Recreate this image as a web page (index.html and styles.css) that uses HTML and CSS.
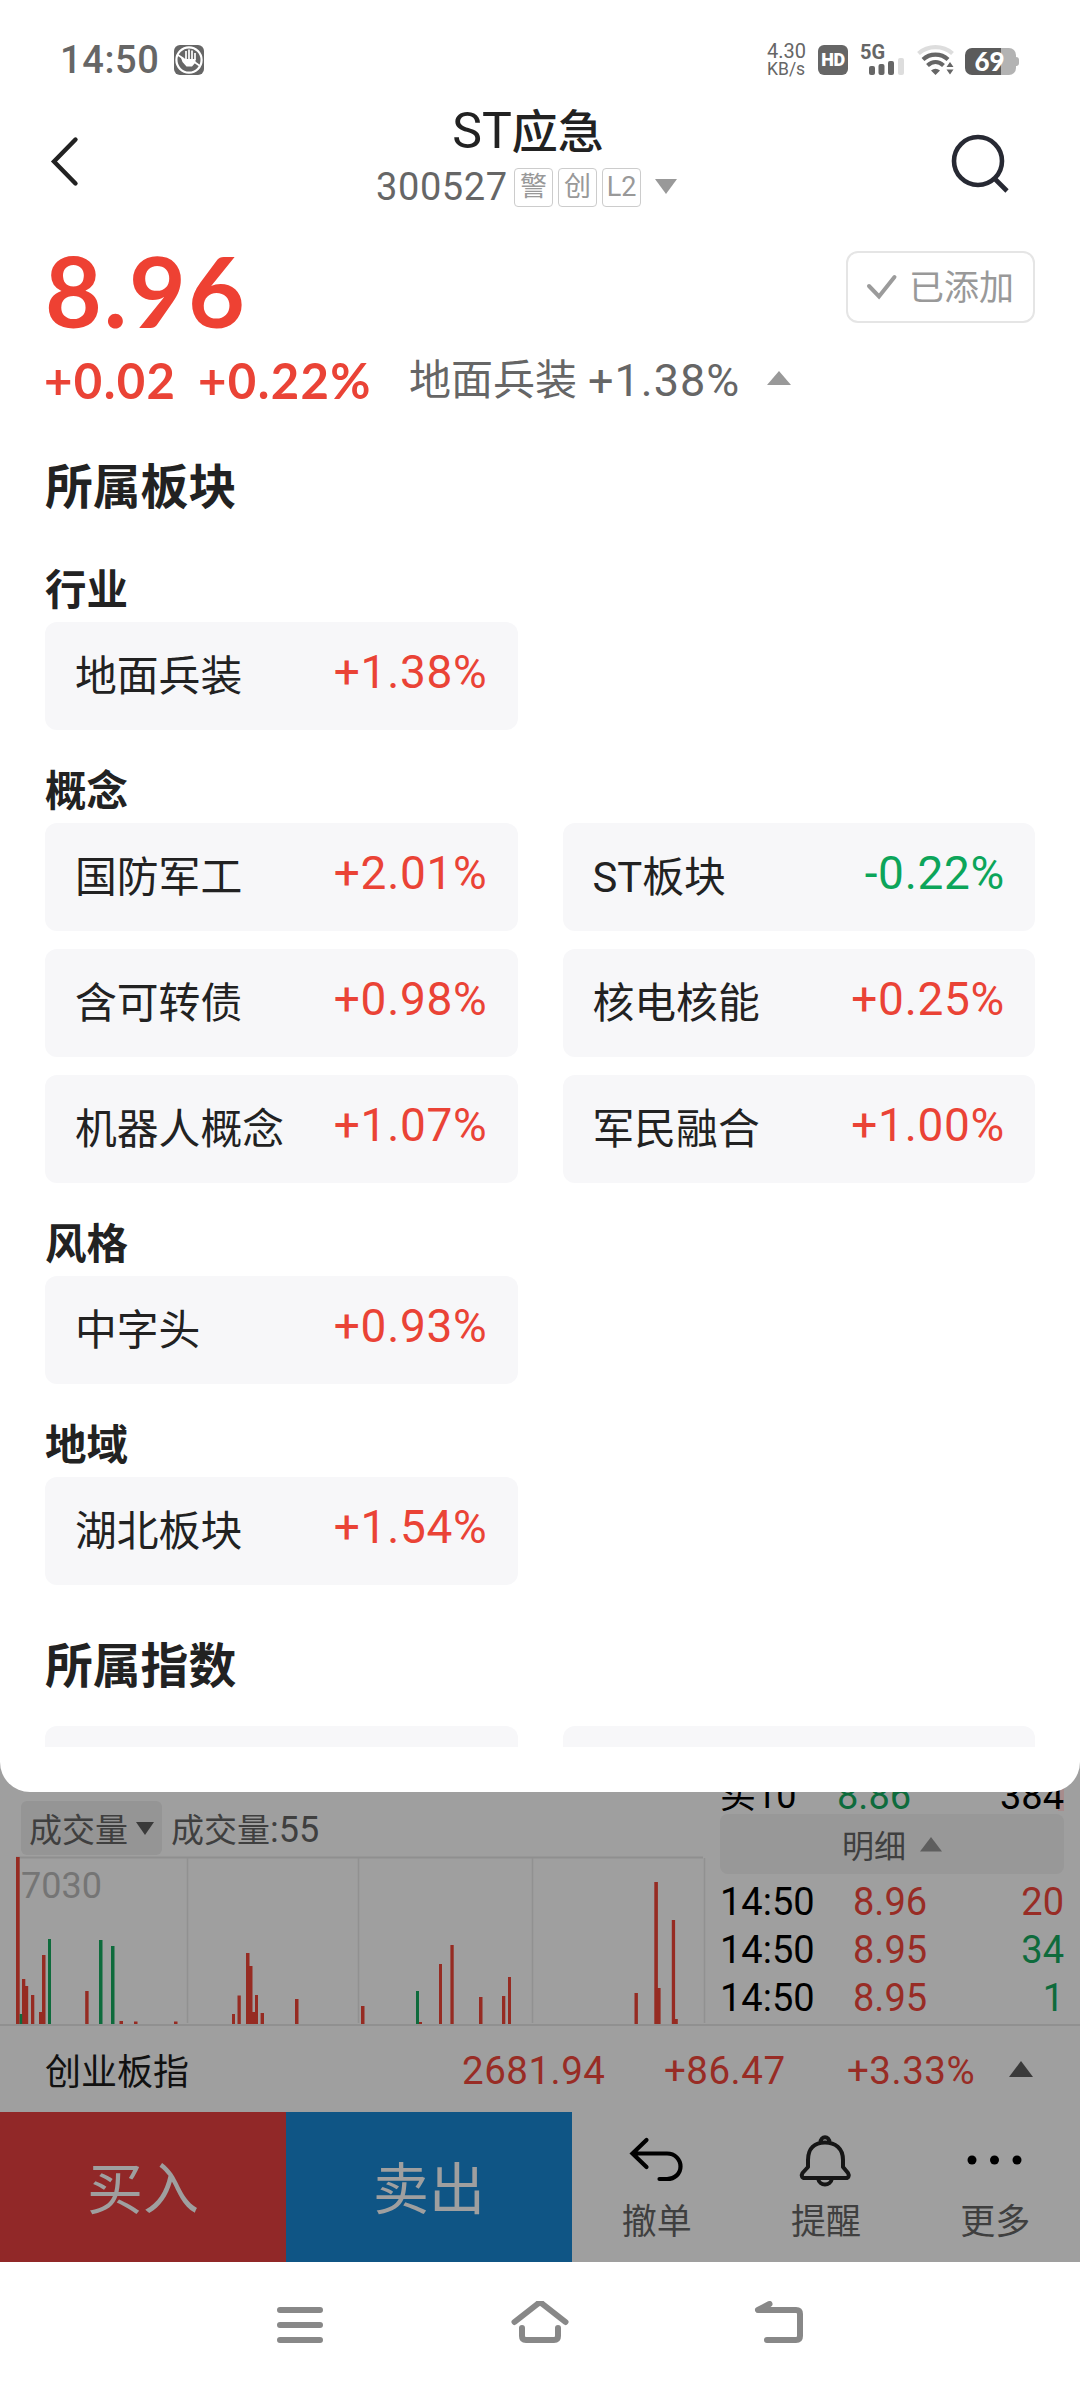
FILE: index.html
```html
<!DOCTYPE html>
<html lang="zh-CN">
<head>
    <meta charset="UTF-8">
    <meta name="viewport" content="width=device-width, initial-scale=1.0">
    <title>ST应急 300527</title>
    <link rel="stylesheet" href="styles.css">
</head>
<body>
    <div class="sheet">
        <div class="status-bar">
            <span class="clock">14:50</span>
            <svg class="hand" width="30" height="30" viewBox="0 0 30 30">
                <rect width="30" height="30" rx="6" fill="#666"/>
                <circle cx="15" cy="15" r="12.6" fill="none" stroke="#fff" stroke-width="2.2"/>
                <path d="M4 10l6 4M12 15V6M15 15V4.500M18 15V5.500M21 15V8M19 16l7 5" fill="none" stroke="#fff" stroke-width="1.700"/>
                <path d="M6.500 11.500l5 2.500h10v3.500l-3.500 4h-5.500l-4-4.500z" fill="#fff"/>
            </svg>
            <div class="status-right">
                <div class="speed"><span>4.30</span><span class="unit">KB/s</span></div>
                <div class="hd">HD</div>
                <div class="signal">
                    <span>5G</span>
                    <svg width="36" height="17" viewBox="0 0 36 17">
                        <rect x="0" y="8" width="6" height="9" rx="2" fill="#666"/>
                        <rect x="9.500" y="6" width="6" height="11" rx="2" fill="#666"/>
                        <rect x="19" y="3" width="6" height="14" rx="2" fill="#666"/>
                        <rect x="29" y="0" width="6" height="17" rx="2" fill="#ddd"/>
                    </svg>
                </div>
                <svg class="wifi" width="38" height="30" viewBox="0 0 38 30">
                    <path d="M1.500 8.500C11 0 26 0 35.500 8.500" fill="none" stroke="#ddd" stroke-width="4.200"/>
                    <path d="M6 14.500C13 8 24 8 31 14.500M10.500 20.500c5-4.500 11-4.500 16 0" fill="none" stroke="#666" stroke-width="4.200"/>
                    <path d="M14 25.500q4.500-3.500 9 0L18.500 30zM29.500 22l3.500-5 3.500 5zM29.500 24.500h7L33 29.500z" fill="#666"/>
                </svg>
                <div class="battery"><span>69</span></div>
            </div>
        </div>

        <div class="title-bar">
            <svg class="back" width="30" height="52" viewBox="0 0 30 52">
                <path d="M26.500 3.500L5 25.500l21.500 22" fill="none" stroke="#222" stroke-width="4.400" stroke-linecap="round"/>
            </svg>
            <div class="title">
                <h1><span>ST</span>应急</h1>
                <div class="code">
                    <span class="code-num">300527</span>
                    <span class="tag">警</span>
                    <span class="tag">创</span>
                    <span class="tag">L2</span>
                    <svg class="code-arrow" width="24" height="16" viewBox="0 0 24 16"><path d="M1 0h22L12 15z" fill="#999"/></svg>
                </div>
            </div>
            <svg class="search" width="60" height="60" viewBox="0 0 60 60">
                <circle cx="27" cy="27" r="24" fill="none" stroke="#272933" stroke-width="4.600"/>
                <path d="M43.500 44.500L56 57" stroke="#272933" stroke-width="4.600"/>
            </svg>
        </div>

        <div class="quote">
            <div class="price">8.96</div>
            <div class="added">
                <svg width="32" height="26" viewBox="0 0 32 26"><path d="M3 12l10 10.500L28.500 3" fill="none" stroke="#9b9b9b" stroke-width="4" stroke-linecap="round"/></svg>
                <span>已添加</span>
            </div>
        </div>
        <div class="change">
            <span class="diff">+0.02</span>
            <span class="diff pct">+0.22%</span>
            <span class="sector">地面兵装</span>
            <span class="sector-pct">+1.38%</span>
            <svg width="24" height="16" viewBox="0 0 24 16"><path d="M0 15h24L12 1z" fill="#999"/></svg>
        </div>

        <div class="boards">
            <h2>所属板块</h2>
            <h3>行业</h3>
            <div class="grid">
                <div class="card"><span>地面兵装</span><b>+1.38%</b></div>
            </div>
            <h3>概念</h3>
            <div class="grid">
                <div class="card"><span>国防军工</span><b>+2.01%</b></div>
                <div class="card"><span>ST板块</span><b class="down">-0.22%</b></div>
                <div class="card"><span>含可转债</span><b>+0.98%</b></div>
                <div class="card"><span>核电核能</span><b>+0.25%</b></div>
                <div class="card"><span>机器人概念</span><b>+1.07%</b></div>
                <div class="card"><span>军民融合</span><b>+1.00%</b></div>
            </div>
            <h3>风格</h3>
            <div class="grid">
                <div class="card"><span>中字头</span><b>+0.93%</b></div>
            </div>
            <h3>地域</h3>
            <div class="grid">
                <div class="card"><span>湖北板块</span><b>+1.54%</b></div>
            </div>
            <h2 class="index-title">所属指数</h2>
            <div class="grid">
                <div class="card"></div>
                <div class="card"></div>
            </div>
        </div>
    </div>

    <div class="market">
        <div class="volume">
            <div class="volume-head">
                <div class="picker">成交量<svg width="18" height="13" viewBox="0 0 18 13"><path d="M0 0h18L9 13z" fill="#3a3a3a"/></svg></div>
                <span class="volume-now">成交量<em>:55</em></span>
            </div>
            <svg class="chart" width="706" height="168" viewBox="0 0 706 168">
                <path d="M16 1.500H703" stroke="#8f8f8f" stroke-width="2"/>
                <path d="M187.500 2V167M358.500 2V167M532.500 2V167M704.500 2V167" stroke="#919191" stroke-width="1.500"/>
                <text x="21" y="42" class="chart-max">7030</text>
                <g class="bars-up">
                    <path d="M16 1h3.700v167H16zM22 123h3.300v45H22zM25.200 130h3v38h-3zM31 139h3.300v29H31zM39 156h3v12h-3zM42 99h3.500v69H42zM85.200 135h3.400v33h-3.400zM119.500 165h3.500v3h-3.500zM134 165.500h3.500v2.500H134zM174 165.500h3.500v2.500H174z"/>
                    <path d="M232 158h3v10h-3zM237.500 139.500h3.300V168h-3.300zM246 97h3.500v71H246zM249.500 110h3v58h-3zM252.500 156h2.500v12h-2.500zM255 139h3v29h-3zM260.600 157h3.400v11h-3.400zM295 143h3.500v25H295zM361 150h3.500v18H361zM419 166h3v2h-3z"/>
                    <path d="M439 108h3v60h-3zM450.400 89h3.300v79h-3.300zM479 141h3.500v27H479zM502 140h3.300v28H502zM508 121h3v47h-3zM634.500 137h3.400v31h-3.400zM654.300 26h3.600v142h-3.600zM657.900 132h2.700v36h-2.700zM671.800 64h3.300v104h-3.300zM675 163h2.800v5H675z"/>
                </g>
                <path class="bars-down" d="M19.700 158h2.500v10h-2.500zM48 83h3v85h-3zM99 84h3.500v84H99zM111 90h3.500v78H111zM416 135h3v33h-3z"/>
            </svg>
        </div>
        <div class="ticks">
            <div class="tick bid"><span>买10</span><span class="down">8.86</span><span>384</span></div>
            <div class="detail">明细<svg width="22" height="16" viewBox="0 0 22 16"><path d="M0 15.500h22L11 1z" fill="#5e5e5e"/></svg></div>
            <div class="tick"><span>14:50</span><span class="up">8.96</span><span class="up">20</span></div>
            <div class="tick"><span>14:50</span><span class="up">8.95</span><span class="down">34</span></div>
            <div class="tick"><span>14:50</span><span class="up">8.95</span><span class="down">1</span></div>
        </div>
    </div>

    <div class="index-row">
        <span class="index-name">创业板指</span>
        <span class="index-value">2681.94</span>
        <span class="index-diff">+86.47</span>
        <span class="index-pct">+3.33%</span>
        <svg width="24" height="16" viewBox="0 0 24 16"><path d="M0 16h24L12 0z" fill="#3a3a3a"/></svg>
    </div>

    <div class="actions">
        <div class="buy">买入</div>
        <div class="sell">卖出</div>
        <div class="action">
            <svg width="56" height="56" viewBox="0 0 56 56">
                <path d="M17.500 8L3.500 21.500l14 13.500M4 21.500h34c8 0 13.500 6 13.500 13s-5.500 12.500-13.500 12.500H30.500" fill="none" stroke="#000" stroke-width="4.200" stroke-linecap="round"/>
            </svg>
            <span>撤单</span>
        </div>
        <div class="action">
            <svg width="56" height="56" viewBox="0 0 56 56">
                <path d="M22.500 10.500c0-7 9-7 9 0M10 28C10 16 17 10.500 27 10.500S45 16 45 28v7l5 6c1.500 2.500.500 5-2 5H6.500c-2.500 0-3.500-2.500-2-5l5.500-6zM20 46.500c1.500 8 12.500 8 14 0" fill="none" stroke="#161616" stroke-width="4" stroke-linejoin="round"/>
            </svg>
            <span>提醒</span>
        </div>
        <div class="action">
            <svg width="56" height="56" viewBox="0 0 56 56">
                <circle cx="5" cy="28" r="4.500"/><circle cx="27.500" cy="28" r="4.500"/><circle cx="50" cy="28" r="4.500"/>
            </svg>
            <span>更多</span>
        </div>
    </div>

    <div class="nav-bar">
        <svg width="56" height="48" viewBox="0 0 56 48">
            <path d="M8 9h40M8 24h40M8 39h40"/>
        </svg>
        <svg width="60" height="48" viewBox="0 0 60 48">
            <path d="M4.500 21L27.500 3q2.500-2 5 0l23 18M12 27v8q0 4 4 4h28q4 0 4-4v-8"/>
        </svg>
        <svg width="56" height="48" viewBox="0 0 56 48">
            <path d="M17.500 3L6 9h38q4 0 4 4v22q0 4-4 4H15"/>
        </svg>
    </div>
</body>
</html>
```
FILE: styles.css
```css
* {
    box-sizing: border-box;
}

body {
    margin: 0;
    width: 1080px;
    height: 2388px;
    overflow: hidden;
    background-color: #9f9f9f;
    font-family: Roboto, "Noto Sans CJK SC", sans-serif;
    font-weight: 450;
    color: #222;
}

svg {
    display: block;
    flex: none;
}

h1, h2, h3 {
    margin: 0;
}

/* 上方弹出面板 */
.sheet {
    height: 1792px;
    background-color: #fff;
    border-radius: 0 0 30px 30px;
    position: relative;
    z-index: 1;
}

.status-bar {
    display: flex;
    align-items: center;
    height: 104px;
    padding: 15px 60px 0;
    color: #666;
}

.clock {
    font-size: 38px;
    font-weight: 500;
    letter-spacing: 0.6px;
    width: 114px;
}

.status-right {
    margin-left: auto;
    display: flex;
    align-items: center;
}

.speed {
    display: flex;
    flex-direction: column;
    width: 51px;
    font-size: 20px;
    line-height: 16px;
}

.speed .unit {
    font-size: 17.5px;
    line-height: 16px;
    margin-top: 2px;
}

.hd {
    width: 30px;
    height: 30px;
    border-radius: 6px;
    background-color: #666;
    color: #fff;
    font-size: 18px;
    font-weight: 900;
    line-height: 30px;
    text-align: center;
    letter-spacing: -0.5px;
}

.signal {
    width: 45px;
    height: 30px;
    margin-left: 12px;
    font-size: 20px;
    font-weight: 700;
    line-height: 15px;
}

.signal span {
    display: block;
    height: 13px;
}

.signal svg {
    margin-left: 9px;
}

.wifi {
    margin-left: 12px;
}

.battery {
    width: 51px;
    height: 27px;
    margin: 3px 4px 0 10px;
    padding-right: 2px;
    border-radius: 7px;
    background: linear-gradient(to right, #5b5b5b 70%, #b3b3b3 70%);
    color: #fff;
    font-family: Lato, sans-serif;
    font-size: 26px;
    font-weight: 900;
    line-height: 27px;
    text-align: center;
    position: relative;
}

.battery::after {
    content: "";
    position: absolute;
    right: -3px;
    top: 9px;
    width: 3px;
    height: 9px;
    border-radius: 0 3px 3px 0;
    background-color: #b3b3b3;
}

.title-bar {
    display: flex;
    justify-content: space-between;
    height: 134px;
    padding: 0 69px 0 49px;
}

.back {
    margin-top: 32px;
}

.title {
    width: 310px;
    margin-left: 32px;
}

.title h1 {
    font-size: 46px;
    font-weight: 500;
    line-height: 54px;
    margin-left: -6px;
    text-align: center;
}

.title h1 span {
    font-size: 50px;
    font-weight: 450;
}

.code {
    display: flex;
    align-items: center;
    height: 40px;
    margin-top: 8px;
}

.code-num {
    color: #666;
    font-size: 38px;
    letter-spacing: 0.6px;
    width: 138px;
}

.tag {
    width: 39px;
    height: 39px;
    margin-right: 5px;
    border: 1.5px solid #ccc;
    border-radius: 4px;
    color: #999;
    font-size: 27px;
    font-weight: 400;
    line-height: 37px;
    text-align: center;
}

.code-arrow {
    margin-left: 8px;
}

.search {
    margin-top: 30px;
}

.quote {
    display: flex;
    justify-content: space-between;
    height: 112px;
    padding: 0 45px 0 45px;
}

.price {
    font-family: Lato, sans-serif;
    font-size: 98px;
    font-weight: 700;
    line-height: 104px;
    letter-spacing: 2px;
    color: #ee4133;
}

.added {
    display: flex;
    align-items: center;
    width: 189px;
    height: 72px;
    margin-top: 13px;
    padding-left: 18px;
    border: 2px solid #e5e5e5;
    border-radius: 12px;
    color: #999;
    font-size: 35px;
    font-weight: 400;
    line-height: 68px;
}

.added span {
    margin: 3px 0 0 11px;
}

.change {
    display: flex;
    align-items: center;
    height: 60px;
    padding-left: 44px;
    white-space: nowrap;
}

.diff {
    width: 154px;
    font-family: Lato, sans-serif;
    font-size: 49px;
    font-weight: 700;
    letter-spacing: 1.4px;
    color: #ea4336;
}

.pct {
    width: 211px;
}

.sector {
    width: 179px;
    font-size: 42px;
    font-weight: 400;
    line-height: 58px;
    margin-top: 2px;
    color: #666;
}

.sector-pct {
    width: 179px;
    font-size: 45px;
    letter-spacing: 1px;
    color: #666;
}

.change svg {
    margin-top: -4px;
}

.boards {
    height: 1337px;
    padding: 0 45px;
    overflow: hidden;
}

.boards h2 {
    height: 154px;
    padding-top: 48px;
    font-size: 47.8px;
    line-height: 60px;
    font-weight: 700;
}

.boards h3 {
    height: 58px;
    font-size: 41.5px;
    line-height: 53px;
    font-weight: 700;
}

.boards .index-title {
    height: 106px;
    padding-top: 17px;
}

.grid {
    display: grid;
    grid-template-columns: 1fr 1fr;
    gap: 18px 45px;
    margin-bottom: 35px;
}

.card {
    display: flex;
    justify-content: space-between;
    height: 108px;
    padding: 0 30px;
    border-radius: 12px;
    background-color: #f7f7f9;
    font-size: 41.8px;
    font-weight: 400;
    line-height: 110px;
}

.card b {
    font-size: 46px;
    font-weight: 450;
    line-height: 100px;
    letter-spacing: 0.7px;
    color: #ea4336;
}

.card .down {
    color: #0ca55a;
}

/* 被遮罩压暗的行情页 */
.market {
    display: flex;
    height: 234px;
    border-bottom: 2px solid #909090;
}

.volume {
    width: 720px;
}

.volume-head {
    display: flex;
    align-items: center;
    height: 64px;
    padding: 8px 0 0 21px;
    font-size: 33px;
    font-weight: 400;
    color: #3f3f3f;
}

.picker {
    display: flex;
    align-items: center;
    width: 141px;
    height: 54px;
    padding-left: 8px;
    border-radius: 6px;
    background-color: #959595;
}

.picker svg {
    margin-left: 8px;
}

.volume-now {
    margin-left: 9px;
}

.volume-now em {
    font-style: normal;
    font-size: 36px;
}

.chart-max {
    font-size: 36px;
    fill: #757575;
    font-weight: 400;
}

.bars-up {
    fill: #962b22;
}

.bars-down {
    fill: #0e6b3c;
}

.ticks {
    width: 344px;
}

.tick {
    display: grid;
    grid-template-columns: 133px 100px 1fr;
    height: 48px;
    line-height: 48px;
    font-size: 38px;
    color: #000;
}

.tick span:last-child {
    text-align: right;
}

.bid {
    grid-template-columns: 117px 100px 1fr;
    height: 48px;
    margin-top: -26px;
    line-height: 61px;
    background: linear-gradient(to left, #a78c8c 6px, transparent 6px);
    background-size: 100% 45px;
    background-repeat: no-repeat;
}

.bid span:first-child {
    font-size: 36px;
    font-weight: 400;
}

.detail {
    display: flex;
    align-items: center;
    justify-content: center;
    height: 60px;
    margin-bottom: 4px;
    border-radius: 8px;
    background-color: #989898;
    color: #3f3f3f;
    font-size: 32px;
    font-weight: 400;
}

.detail svg {
    margin-left: 14px;
}

.up {
    color: #982c25;
}

.down {
    color: #0e6b3c;
}

.index-row {
    display: flex;
    align-items: center;
    height: 88px;
    margin-bottom: -2px;
    padding-left: 45px;
    font-size: 38.5px;
    letter-spacing: 0.5px;
    color: #982c25;
}

.index-name {
    width: 417px;
    margin-top: -3px;
    font-size: 36px;
    font-weight: 400;
    letter-spacing: 0;
    color: #111;
}

.index-value {
    width: 202px;
}

.index-diff {
    width: 183px;
}

.index-pct {
    width: 162px;
}

.index-row svg {
    margin-top: -2px;
}

.actions {
    display: flex;
    height: 150px;
}

.buy,
.sell {
    width: 286px;
    color: #9f9f9f;
    font-size: 56px;
    font-weight: 400;
    line-height: 157px;
    text-align: center;
    background-color: #912828;
}

.sell {
    background-color: #0f5585;
}

.action {
    flex: 1;
    display: flex;
    flex-direction: column;
    align-items: center;
    padding-top: 20px;
    font-size: 35px;
    font-weight: 400;
    color: #3f3f3f;
}

.action span {
    line-height: 70px;
}

.nav-bar {
    display: flex;
    justify-content: center;
    gap: 182px;
    height: 126px;
    padding-top: 39px;
    background-color: #fff;
}

.nav-bar path {
    fill: none;
    stroke: #888;
    stroke-width: 6;
    stroke-linecap: round;
    stroke-linejoin: round;
}
```
